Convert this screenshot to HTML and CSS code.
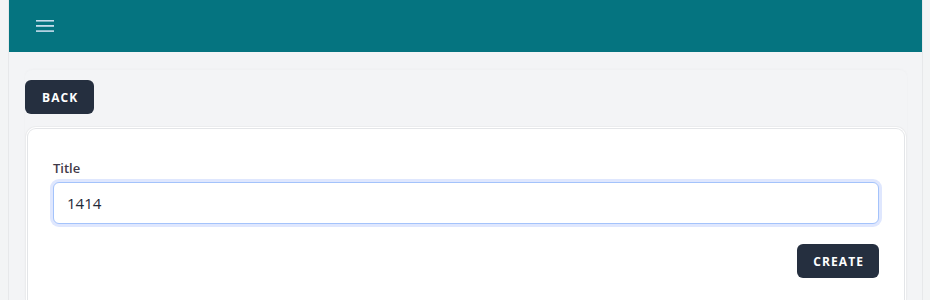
FILE: index.html
```html
<!DOCTYPE html>
<html>
<head>
<meta charset="utf-8">
<link rel="stylesheet" href="styles.css">
</head>
<body>
<div class="shell">
  <aside class="rail"></aside>
  <div class="main">
    <header class="topbar">
      <button class="menu-btn" aria-label="Menu">
        <svg width="18" height="14" viewBox="0 0 18 14"><rect x="0" y="1" width="18" height="1.6" fill="#c6dcec"/><rect x="0" y="6" width="18" height="1.8" fill="#c6dcec"/><rect x="0" y="11.3" width="18" height="1.6" fill="#c6dcec"/></svg>
      </button>
    </header>
    <section class="content">
      <div class="page">
        <div class="toolbar"><button class="btn btn-back">Back</button></div>
        <div class="card">
          <label class="label" for="title">Title</label>
          <div class="field"><input id="title" class="input" type="text" value="1414" autofocus></div>
          <div class="actions"><button class="btn">Create</button></div>
        </div>
      </div>
    </section>
  </div>
  <aside class="rail rail-right"></aside>
</div>
</body>
</html>
```
FILE: styles.css
```css
* { box-sizing: border-box; }
html, body { margin: 0; padding: 0; height: 100%; }
body { background: #f4f5f7; font-family: "Open Sans", "Noto Sans", sans-serif; overflow: hidden; }
.shell { display: flex; height: 300px; overflow: hidden; }
.rail { width: 9px; flex: none; background: #f3f4f5; border-right: 1px solid #e7e8ea; }
.rail-right { width: 8px; border-right: none; border-left: 1px solid #e7e8ea; }
.main { flex: 1; display: flex; flex-direction: column; background: #f3f4f6; min-width: 0; }
.topbar { height: 52px; background: #057480; display: flex; align-items: center; padding-left: 27px; flex: none; }
.menu-btn { background: none; border: none; padding: 0; display: flex; margin-top: -1px; }
.content { padding: 18px 15px 0 16px; flex: 1; min-height: 0; display: flex; flex-direction: column; }
.page { flex: 1; display: flex; flex-direction: column; border-radius: 8px 8px 0 0; box-shadow: 0 -1px 3px rgba(0,0,0,0.025); padding-top: 10px; min-height: 0; }
.toolbar { display: flex; flex: none; }
.btn { background: #252f3f; color: #fff; border: none; border-radius: 6px; height: 34px; padding: 0 16px; font-family: "Open Sans", "Noto Sans", sans-serif; font-size: 12px; font-weight: 700; letter-spacing: 0.09em; text-transform: uppercase; }
.btn-back { padding: 0 16px 0 17px; }
.card { flex: 1; margin: 14px 2px 0 2px; background: #fff; border: 1px solid #e3e5e8; border-bottom: none; border-radius: 9px 9px 0 0; box-shadow: 0 0 0 1px #fff, 0 0 0 2px #ebecee; padding: 30px 25px 0 25px; }
.label { display: block; font-size: 13px; font-weight: 600; color: #3f3a48; line-height: 18px; }
.field { margin-top: 5px; }
.input { width: 100%; height: 42px; border: 1px solid #a4c3fb; border-radius: 6px; box-shadow: 0 0 0 3px #dfe7fe; padding: 0 13px; font-family: "Open Sans", "Noto Sans", sans-serif; font-size: 15px; color: #1f2937; outline: none; background: #fff; }
.actions { display: flex; justify-content: flex-end; margin-top: 20px; }
.actions .btn { padding: 0 15px 0 16px; }
```
